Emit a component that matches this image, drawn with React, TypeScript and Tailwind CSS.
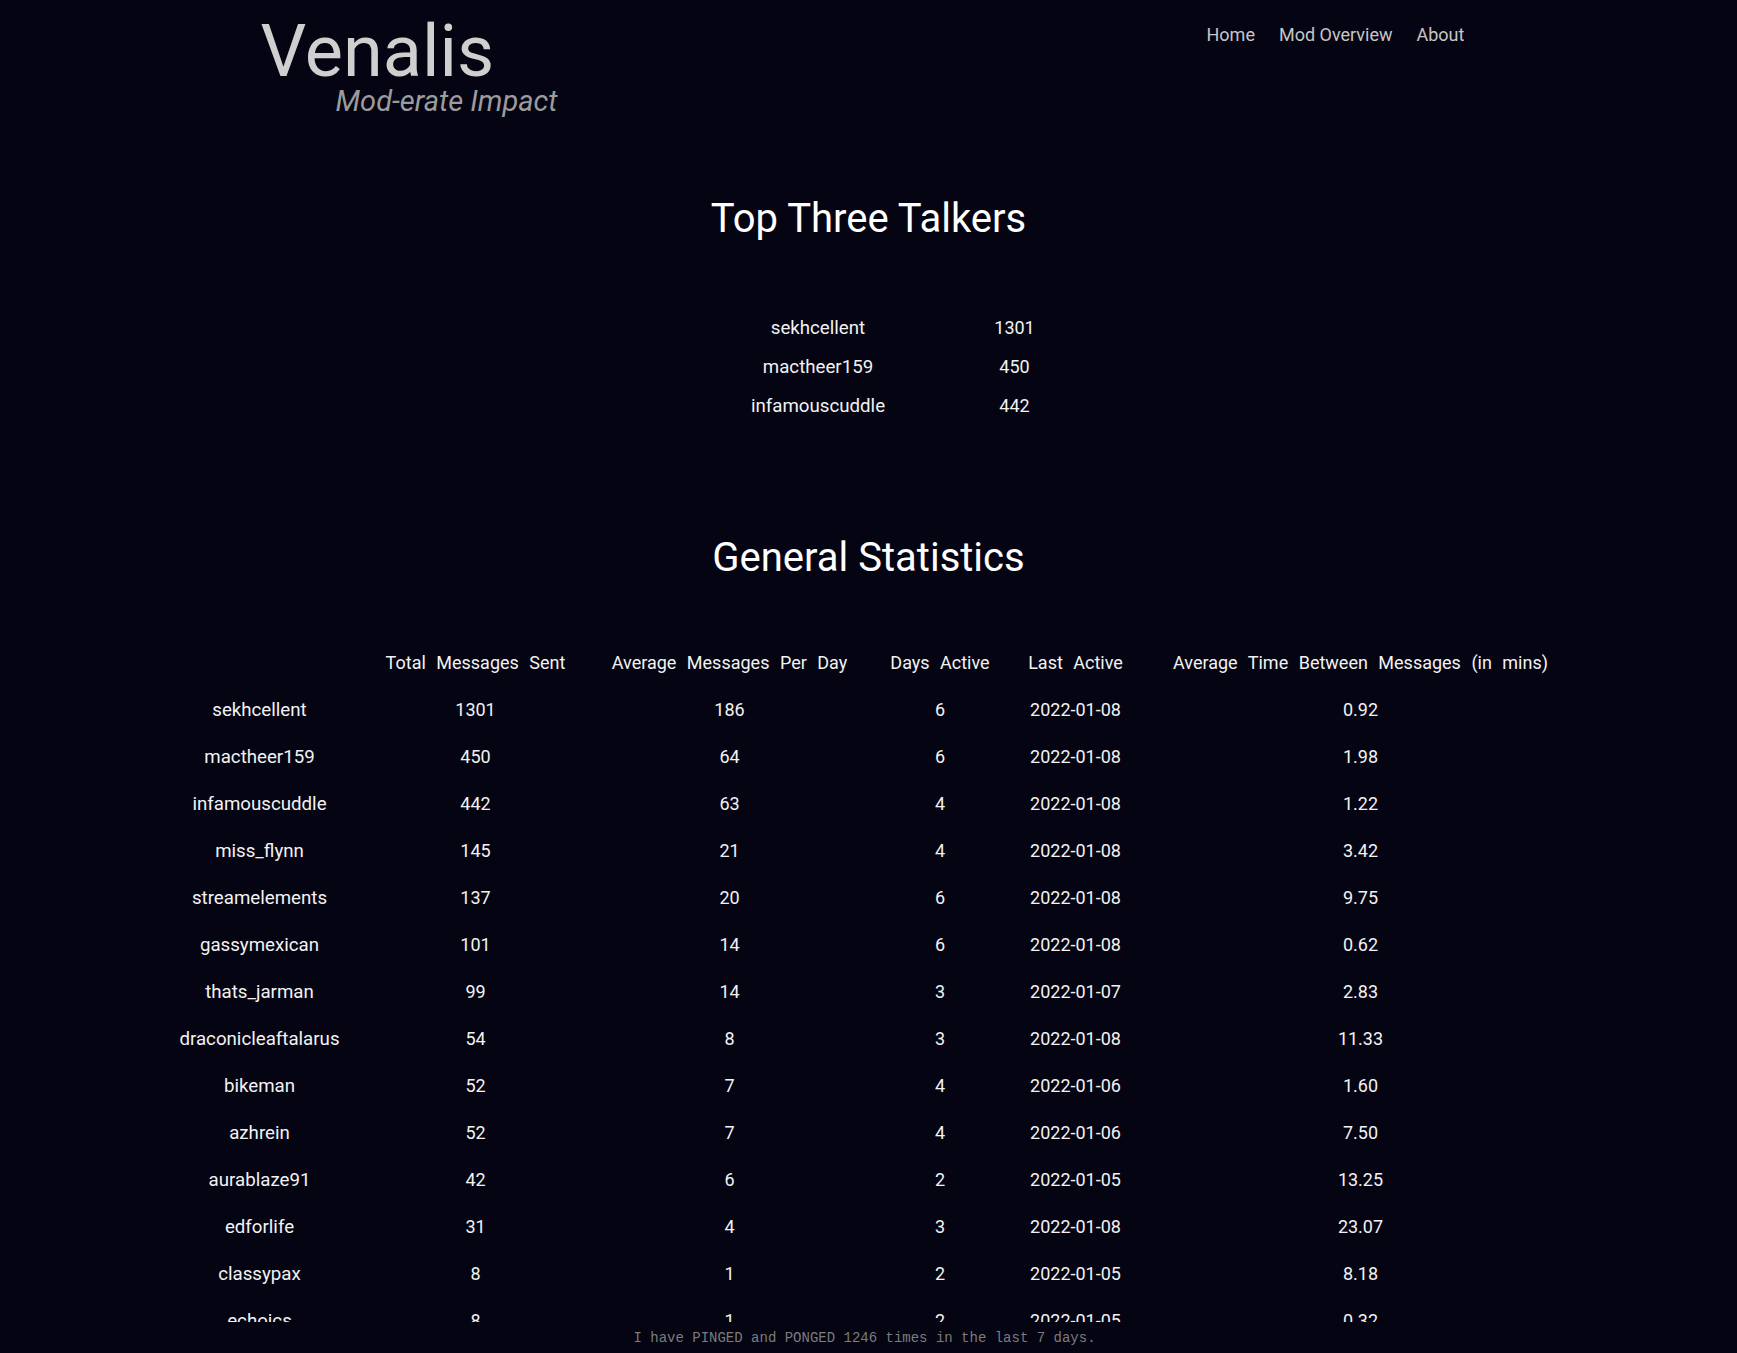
import React from "react";

const top3 = [
  ["sekhcellent", "1301"],
  ["mactheer159", "450"],
  ["infamouscuddle", "442"],
];

const rows: [string, string, string, string, string, string][] = [
  ["sekhcellent", "1301", "186", "6", "2022-01-08", "0.92"],
  ["mactheer159", "450", "64", "6", "2022-01-08", "1.98"],
  ["infamouscuddle", "442", "63", "4", "2022-01-08", "1.22"],
  ["miss_flynn", "145", "21", "4", "2022-01-08", "3.42"],
  ["streamelements", "137", "20", "6", "2022-01-08", "9.75"],
  ["gassymexican", "101", "14", "6", "2022-01-08", "0.62"],
  ["thats_jarman", "99", "14", "3", "2022-01-07", "2.83"],
  ["draconicleaftalarus", "54", "8", "3", "2022-01-08", "11.33"],
  ["bikeman", "52", "7", "4", "2022-01-06", "1.60"],
  ["azhrein", "52", "7", "4", "2022-01-06", "7.50"],
  ["aurablaze91", "42", "6", "2", "2022-01-05", "13.25"],
  ["edforlife", "31", "4", "3", "2022-01-08", "23.07"],
  ["classypax", "8", "1", "2", "2022-01-05", "8.18"],
  ["echoics", "8", "1", "2", "2022-01-05", "0.32"],
];

const headers = [
  "Total Messages Sent",
  "Average Messages Per Day",
  "Days Active",
  "Last Active",
  "Average Time Between Messages (in mins)",
];

export default function App() {
  return (
    <div
      className="h-[1353px] flex flex-col bg-[#050413] text-[#f2f2f2] overflow-hidden"
      style={{ fontFamily: "Roboto, 'Noto Sans', sans-serif" }}
    >
      <main className="flex-1 overflow-hidden">
        <header className="w-[70%] mx-auto flex justify-between items-start pt-[16px]">
          <div className="flex flex-col">
            <div className="text-[72px] leading-none text-[#cfcfcf]">Venalis</div>
            <div className="mt-[1px] text-[29px] leading-[24px] italic text-[#9c9c9c] pl-[75px]">
              Mod-erate Impact
            </div>
          </div>
          <nav className="flex mt-[10px] text-[18px] leading-none text-[#c6c6c6]">
            <a className="px-3">Home</a>
            <a className="px-3">Mod Overview</a>
            <a className="px-3">About</a>
          </nav>
        </header>

        <h2 className="mt-[86px] text-center text-[40px] leading-none font-normal text-white">
          Top Three Talkers
        </h2>

        <table className="mt-[69px] mx-auto table-fixed border-collapse text-[18px] leading-none">
          <tbody>
            {top3.map(([n, v]) => (
              <tr key={n} className="h-[39px]">
                <td className="w-[292px] p-0 pt-[2px] text-center text-[18.7px]">{n}</td>
                <td className="w-[101px] p-0 text-center">{v}</td>
              </tr>
            ))}
          </tbody>
        </table>

        <h2 className="mt-[113px] text-center text-[40px] leading-none font-normal text-white">
          General Statistics
        </h2>

        <table className="mt-[61px] mx-auto table-fixed border-collapse text-[18px] leading-none">
          <thead>
            <tr className="h-[47px]">
              <th className="w-[205px] p-0"></th>
              {headers.map((h, i) => (
                <th
                  key={h}
                  className={
                    "p-0 text-center font-normal [word-spacing:6px] " +
                    ["w-[227px]", "w-[281px]", "w-[140px]", "w-[131px]", "w-[439px]"][i]
                  }
                >
                  {h}
                </th>
              ))}
            </tr>
          </thead>
          <tbody>
            {rows.map((r) => (
              <tr key={r[0]} className="h-[47px]">
                <td className="p-0 pt-[2px] text-center text-[18.7px]">{r[0]}</td>
                <td className="p-0 text-center">{r[1]}</td>
                <td className="p-0 text-center">{r[2]}</td>
                <td className="p-0 text-center">{r[3]}</td>
                <td className="p-0 text-center">{r[4]}</td>
                <td className="p-0 text-center">{r[5]}</td>
              </tr>
            ))}
          </tbody>
        </table>
      </main>
      <footer
        className="h-[31px] shrink-0 flex items-center justify-center pr-[8px] text-[14px] leading-none text-[#7c7c7c]"
        style={{ fontFamily: "'Liberation Mono', monospace" }}
      >
        I have PINGED and PONGED 1246 times in the last 7 days.
      </footer>
    </div>
  );
}
